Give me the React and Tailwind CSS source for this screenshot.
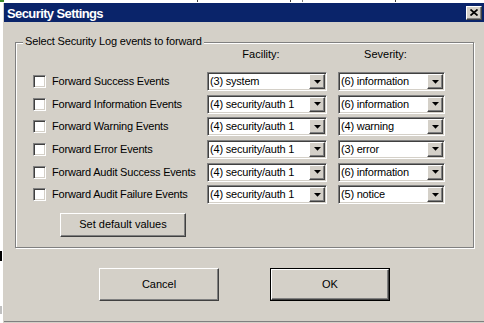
import React from 'react';

const rows = [
  ['Forward Success Events', '(3) system', '(6) information'],
  ['Forward Information Events', '(4) security/auth 1', '(6) information'],
  ['Forward Warning Events', '(4) security/auth 1', '(4) warning'],
  ['Forward Error Events', '(4) security/auth 1', '(3) error'],
  ['Forward Audit Success Events', '(4) security/auth 1', '(6) information'],
  ['Forward Audit Failure Events', '(4) security/auth 1', '(5) notice'],
];

const raised =
  'border border-t-white border-l-white border-r-[#404040] border-b-[#404040] shadow-[inset_-1px_-1px_0_#808080] bg-[#d4d0c8]';
const sunken =
  'border border-t-[#808080] border-l-[#808080] border-r-white border-b-white shadow-[inset_1px_1px_0_#404040,inset_-1px_-1px_0_#d4d0c8]';

const Combo = ({ value }) => (
  <div className={`h-[19px] flex items-stretch bg-white ${sunken} p-[1px]`}>
    <div className="flex-1 flex items-center pl-[1px] leading-[13px] tracking-[-0.2px] whitespace-nowrap overflow-hidden">
      {value}
    </div>
    <div className={`w-[16px] flex items-center justify-center ${raised}`}>
      <svg width="7" height="4" viewBox="0 0 7 4">
        <polygon points="0,0 7,0 3.5,3.8" fill="#000" />
      </svg>
    </div>
  </div>
);

const Checkbox = () => (
  <div className={`w-[13px] h-[13px] bg-white shrink-0 ${sunken}`} />
);

export default function App() {
  return (
    <div className='w-[484px] h-[323px] overflow-hidden bg-white flex flex-col font-["Liberation_Sans",Arial,sans-serif] text-[11px] text-black'>
      {/* background window peeking out at the top */}
      <div className="h-[2px] flex shrink-0">
        <div className="w-[4px] bg-[#3a8a2a]" />
        <div className="w-[193px]" />
        <div className="w-[1px] bg-[#404040]" />
        <div className="w-[92px]" />
        <div className="w-[1px] bg-[#404040]" />
        <div className="w-[11px]" />
        <div className="w-[1px] bg-[#808080]" />
        <div className="w-[92px]" />
        <div className="w-[1px] bg-[#404040]" />
      </div>

      <div className="flex flex-1">
        <div className="w-[2px] flex flex-col shrink-0">
          <div className="h-[249px]" />
          <div className="h-[10px] bg-black" />
          <div className="h-[45px]" />
          <div className="h-[8px] bg-[#c0c0c0]" />
        </div>

        <div className="w-[482px] shrink-0 flex flex-col border-l border-t border-white bg-[#d4d0c8] pl-[1px]">
          {/* title bar */}
          <div className="h-[19px] shrink-0 bg-[#0a246a] flex items-center justify-between pl-[3px] pr-[2px]">
            <span className="text-white font-bold text-[13px] tracking-[-0.6px] leading-[15px] mt-[1px]">
              Security Settings
            </span>
            <div className={`w-[16px] h-[14px] flex items-center justify-center ${raised}`}>
              <svg width="8" height="7" viewBox="0 0 8 7">
                <path d="M0.5 0.5 L7.5 6.5 M7.5 0.5 L0.5 6.5" stroke="#000" strokeWidth="1.7" />
              </svg>
            </div>
          </div>

          {/* body */}
          <div className="flex-1 flex flex-col border-b border-[#808080]">
            <div className="ml-[11px] mt-[20px] w-[459px] h-[206px] border border-[#808080] shadow-[inset_1px_1px_0_#fff,1px_1px_0_#fff] flex flex-col">
              <div className="-mt-[8px] ml-[7px] px-[2px] w-fit bg-[#d4d0c8] leading-[13px] tracking-[-0.15px]">
                Select Security Log events to forward
              </div>

              <div className="pl-[17px]">
                <div className="grid grid-cols-[163px_120px_107px] gap-x-[11px] leading-[13px]">
                  <div />
                  <div className="text-center pr-[12px]">Facility:</div>
                  <div className="text-center pr-[12px]">Severity:</div>
                </div>

                <div className="mt-[11px] grid grid-cols-[163px_120px_107px] gap-x-[11px] gap-y-[3.67px]">
                  {rows.map(([label, fac, sev]) => (
                    <React.Fragment key={label}>
                      <div className="h-[19px] flex items-center gap-[6px]">
                        <Checkbox />
                        <span className="leading-[13px] tracking-[-0.2px] whitespace-nowrap">{label}</span>
                      </div>
                      <Combo value={fac} />
                      <Combo value={sev} />
                    </React.Fragment>
                  ))}
                </div>

                <button
                  className={`mt-[8.7px] ml-[27px] w-[126px] h-[24px] flex items-center justify-center leading-[13px] ${raised}`}
                >
                  Set default values
                </button>
              </div>
            </div>

            <div className="mt-[20px] ml-[95px] flex gap-[51px]">
              <button className={`w-[120px] h-[33px] flex items-center justify-center leading-[13px] ${raised}`}>
                Cancel
              </button>
              <div className="w-[120px] h-[33px] border border-black flex">
                <button className={`flex-1 flex items-center justify-center leading-[13px] ${raised}`}>
                  OK
                </button>
              </div>
            </div>
          </div>
          <div className="h-[1px] bg-[#d4d0c8]" />
        </div>
      </div>
    </div>
  );
}
